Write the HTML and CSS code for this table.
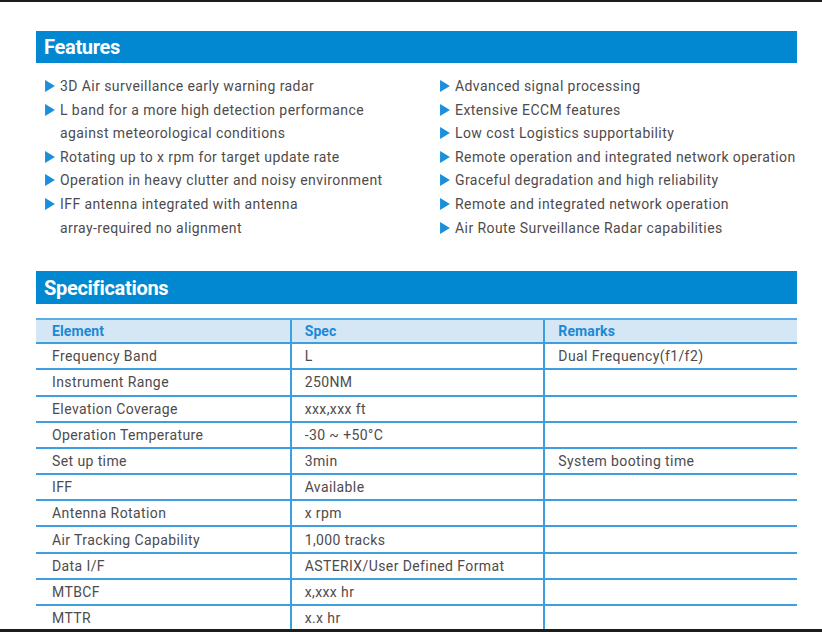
FILE: index.html
```html
<!DOCTYPE html>
<html lang="en">
<head>
<meta charset="utf-8">
<title>Radar Features &amp; Specifications</title>
<link rel="stylesheet" href="styles.css">
</head>
<body>
<div class="page">
  <section class="section features">
    <h2 class="bar">Features</h2>
    <div class="feature-cols">
      <ul class="feature-list">
        <li><svg class="tri" viewBox="0 0 9 11"><polygon points="0,0 9,5.5 0,11"/></svg><span>3D Air surveillance early warning radar</span></li>
        <li><svg class="tri" viewBox="0 0 9 11"><polygon points="0,0 9,5.5 0,11"/></svg><span>L band for a more high detection performance<br>against meteorological conditions</span></li>
        <li><svg class="tri" viewBox="0 0 9 11"><polygon points="0,0 9,5.5 0,11"/></svg><span>Rotating up to x rpm for target update rate</span></li>
        <li><svg class="tri" viewBox="0 0 9 11"><polygon points="0,0 9,5.5 0,11"/></svg><span>Operation in heavy clutter and noisy environment</span></li>
        <li><svg class="tri" viewBox="0 0 9 11"><polygon points="0,0 9,5.5 0,11"/></svg><span>IFF antenna integrated with antenna<br>array-required no alignment</span></li>
      </ul>
      <ul class="feature-list">
        <li><svg class="tri" viewBox="0 0 9 11"><polygon points="0,0 9,5.5 0,11"/></svg><span>Advanced signal processing</span></li>
        <li><svg class="tri" viewBox="0 0 9 11"><polygon points="0,0 9,5.5 0,11"/></svg><span>Extensive ECCM features</span></li>
        <li><svg class="tri" viewBox="0 0 9 11"><polygon points="0,0 9,5.5 0,11"/></svg><span>Low cost Logistics supportability</span></li>
        <li><svg class="tri" viewBox="0 0 9 11"><polygon points="0,0 9,5.5 0,11"/></svg><span>Remote operation and integrated network operation</span></li>
        <li><svg class="tri" viewBox="0 0 9 11"><polygon points="0,0 9,5.5 0,11"/></svg><span>Graceful degradation and high reliability</span></li>
        <li><svg class="tri" viewBox="0 0 9 11"><polygon points="0,0 9,5.5 0,11"/></svg><span>Remote and integrated network operation</span></li>
        <li><svg class="tri" viewBox="0 0 9 11"><polygon points="0,0 9,5.5 0,11"/></svg><span>Air Route Surveillance Radar capabilities</span></li>
      </ul>
    </div>
  </section>

  <section class="section specs">
    <h2 class="bar">Specifications</h2>
    <div class="spec-table">
      <div class="cell head">Element</div><div class="cell head">Spec</div><div class="cell head">Remarks</div>
      <div class="cell">Frequency Band</div><div class="cell">L</div><div class="cell">Dual Frequency(f1/f2)</div>
      <div class="cell">Instrument Range</div><div class="cell">250NM</div><div class="cell"></div>
      <div class="cell">Elevation Coverage</div><div class="cell">xxx,xxx ft</div><div class="cell"></div>
      <div class="cell">Operation Temperature</div><div class="cell">-30 ~ +50°C</div><div class="cell"></div>
      <div class="cell">Set up time</div><div class="cell">3min</div><div class="cell">System booting time</div>
      <div class="cell">IFF</div><div class="cell">Available</div><div class="cell"></div>
      <div class="cell">Antenna Rotation</div><div class="cell">x rpm</div><div class="cell"></div>
      <div class="cell">Air Tracking Capability</div><div class="cell">1,000 tracks</div><div class="cell"></div>
      <div class="cell">Data I/F</div><div class="cell">ASTERIX/User Defined Format</div><div class="cell"></div>
      <div class="cell">MTBCF</div><div class="cell">x,xxx hr</div><div class="cell"></div>
      <div class="cell">MTTR</div><div class="cell">x.x hr</div><div class="cell"></div>
    </div>
  </section>
</div>
</body>
</html>
```

FILE: styles.css
```css
html, body {
  margin: 0;
  padding: 0;
  background: #ffffff;
}

.page {
  width: 822px;
  height: 632px;
  box-sizing: border-box;
  border-top: 2px solid #1c1c1c;
  border-bottom: 3px solid #1c1c1c;
  overflow: hidden;
  font-family: Roboto, "Liberation Sans", sans-serif;
  color: #4e4b4c;
}

.section {
  margin-left: 36px;
  width: 761px;
}

.features {
  margin-top: 29px;
}

.bar {
  margin: 0;
  height: 32px;
  box-sizing: border-box;
  padding-left: 8px;
  display: flex;
  align-items: center;
  background: #0288d1;
  color: #ffffff;
  font-size: 20px;
  font-weight: 700;
  letter-spacing: -0.3px;
}

.specs .bar {
  height: 33px;
}

.feature-cols {
  display: grid;
  grid-template-columns: 395px 1fr;
  padding-left: 9px;
  margin-top: 12px;
}

.feature-list {
  list-style: none;
  margin: 0;
  padding: 0;
  font-size: 14px;
  line-height: 23.6px;
  letter-spacing: 0.42px;
}

.feature-list li {
  display: flex;
  align-items: flex-start;
}

.tri {
  flex: none;
  width: 10px;
  height: 12px;
  margin-top: 5px;
  margin-right: 5px;
  fill: #1a8fdc;
}

.specs {
  margin-top: 31px;
}

.spec-table {
  display: grid;
  grid-template-columns: repeat(3, 1fr);
  margin-top: 14px;
  border-top: 2px solid #5aaee6;
  font-size: 14px;
  letter-spacing: 0.4px;
}

.cell {
  height: 26.2px;
  box-sizing: border-box;
  display: flex;
  align-items: center;
  padding-left: 16px;
  border-bottom: 2px solid #3d9fe0;
  white-space: nowrap;
}

.cell:nth-child(3n+2),
.cell:nth-child(3n) {
  border-left: 2px solid #3d9fe0;
  padding-left: 13px;
}

.cell.head {
  height: 24px;
  background: #d5e6f5;
  color: #1a8ad6;
  font-weight: 700;
  letter-spacing: 0.1px;
}
```
